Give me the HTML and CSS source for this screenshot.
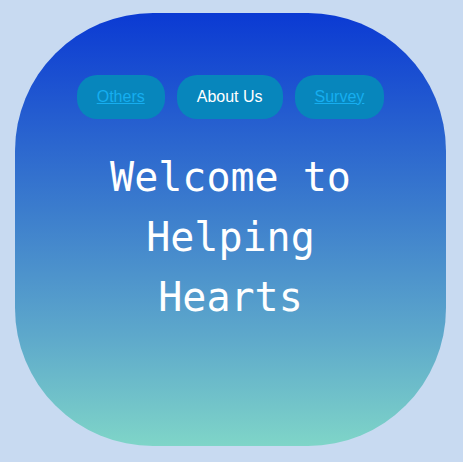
FILE: index.html
```html
<!DOCTYPE html>
<html lang="en">
<head>
<meta charset="utf-8">
<title>Helping Hearts</title>
<link rel="stylesheet" href="styles.css">
</head>
<body>
<main class="card">
  <nav class="nav">
    <a class="nav-btn" href="#others">Others</a>
    <span class="nav-btn current">About Us</span>
    <a class="nav-btn" href="#survey">Survey</a>
  </nav>
  <h1 class="title">Welcome to Helping Hearts</h1>
</main>
</body>
</html>
```
FILE: styles.css
```css
html, body {
  margin: 0;
  padding: 0;
}
body {
  background: #c8daf1;
  padding: 13px 17px 16px 15px;
  font-family: "Liberation Sans", Arial, sans-serif;
}
.card {
  width: 431px;
  height: 433px;
  box-sizing: border-box;
  border-radius: 138px;
  background: linear-gradient(to bottom, #0b3ad3 0%, #3b7ccd 45%, #5ea9cb 75%, #7fd5c8 100%);
  padding-top: 62px;
  display: flex;
  flex-direction: column;
  align-items: center;
}
.nav {
  display: flex;
  gap: 12px;
}
.nav-btn {
  display: block;
  background: #0786bc;
  border-radius: 20px;
  padding: 13px 20px;
  font-size: 16px;
  line-height: 18px;
  color: #16aef0;
  text-decoration: underline;
}
.nav-btn.current {
  color: #ffffff;
  text-decoration: none;
}
.title {
  margin: 28px 0 0;
  width: 300px;
  text-align: center;
  font-family: "DejaVu Sans Mono", "Liberation Mono", monospace;
  font-weight: normal;
  font-size: 40px;
  line-height: 60px;
  color: #ffffff;
}
```
